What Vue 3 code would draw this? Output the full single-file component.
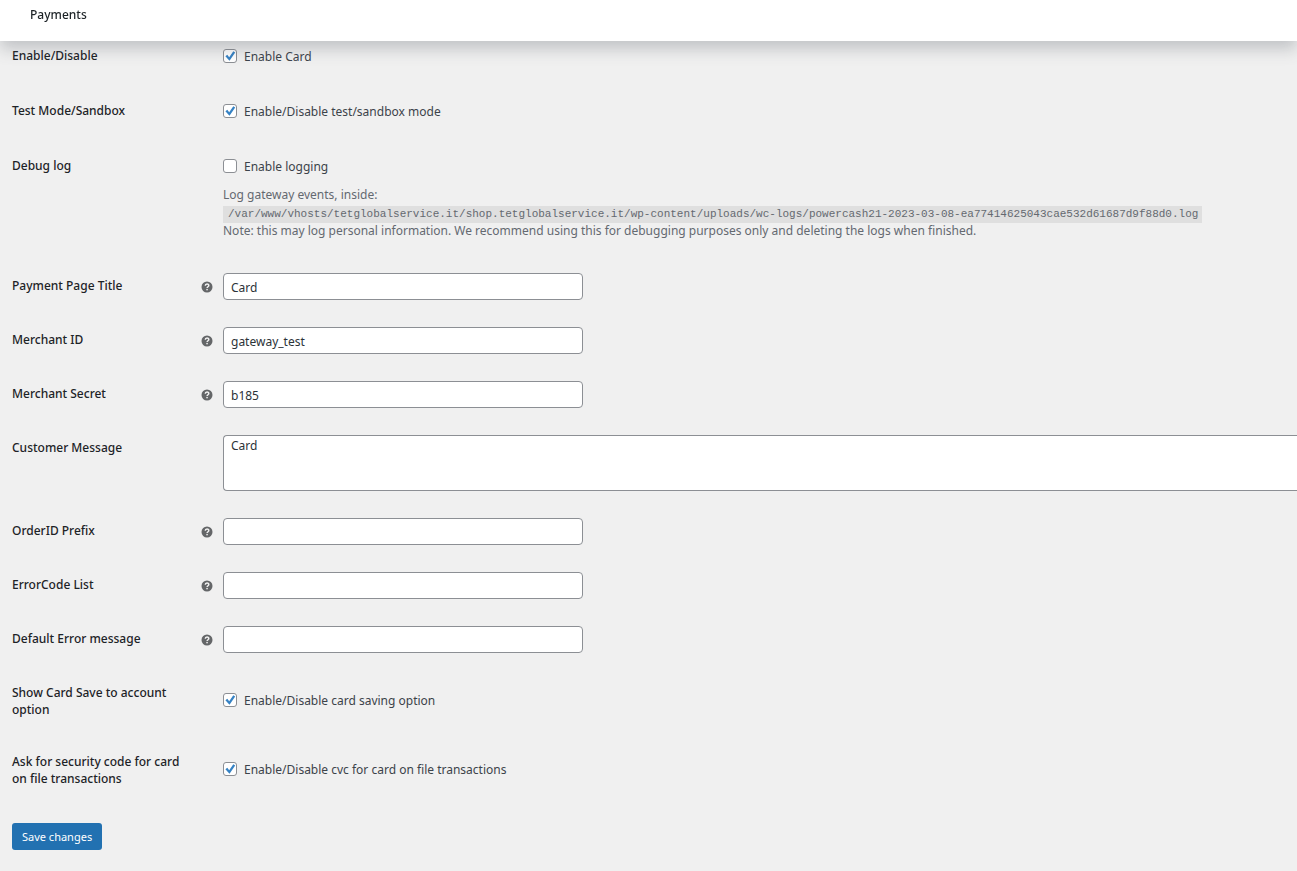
<script setup>
import { reactive } from 'vue'

const logPath =
  '/var/www/vhosts/tetglobalservice.it/shop.tetglobalservice.it/wp-content/uploads/wc-logs/powercash21-2023-03-08-ea77414625043cae532d61687d9f88d0.log'

const fields = reactive([
  { id: 'enabled', type: 'checkbox', label: 'Enable/Disable', text: 'Enable Card', value: true },
  { id: 'sandbox', type: 'checkbox', label: 'Test Mode/Sandbox', text: 'Enable/Disable test/sandbox mode', value: true },
  { id: 'debug', type: 'checkbox', label: 'Debug log', text: 'Enable logging', value: false, log: true },
  { id: 'title', type: 'text', label: 'Payment Page Title', value: 'Card', help: true },
  { id: 'merchant-id', type: 'text', label: 'Merchant ID', value: 'gateway_test', help: true },
  { id: 'merchant-secret', type: 'text', label: 'Merchant Secret', value: 'b185', help: true },
  { id: 'message', type: 'textarea', label: 'Customer Message', value: 'Card' },
  { id: 'prefix', type: 'text', label: 'OrderID Prefix', value: '', help: true },
  { id: 'error-codes', type: 'text', label: 'ErrorCode List', value: '', help: true },
  { id: 'error-message', type: 'text', label: 'Default Error message', value: '', help: true },
  { id: 'save-card', type: 'checkbox', label: 'Show Card Save to account option', text: 'Enable/Disable card saving option', value: true },
  { id: 'ask-cvc', type: 'checkbox', label: 'Ask for security code for card on file transactions', text: 'Enable/Disable cvc for card on file transactions', value: true }
])
</script>

<template>
  <header class="topbar"><h1>Payments</h1></header>
  <form class="settings" @submit.prevent>
    <div v-for="f in fields" :key="f.id" class="row" :class="f.type">
      <div class="head">
        <label :for="f.id">{{ f.label }}</label>
        <svg v-if="f.help" class="help" viewBox="0 0 12 12" aria-hidden="true">
          <circle cx="6" cy="6" r="5.5" fill="#646668" />
          <path d="M4.3 4.7C4.3 2.5 7.8 2.5 7.8 4.5C7.8 5.8 6.1 5.7 6.1 7.1" fill="none" stroke="#f0f0f0" stroke-width="1.5" />
          <rect x="5.3" y="7.9" width="1.5" height="1.4" fill="#f0f0f0" />
        </svg>
      </div>
      <div class="field">
        <template v-if="f.type === 'checkbox'">
          <label class="check">
            <span class="box">
              <input :id="f.id" v-model="f.value" type="checkbox" />
              <svg v-if="f.value" class="tick" viewBox="0 0 14 14" aria-hidden="true">
                <path d="M2.4 7.3L4.3 5.8L6.2 8.2L10.3 2.3L12.2 3.6L6.5 11.8Z" fill="#3582c4" />
              </svg>
            </span>
            <span>{{ f.text }}</span>
          </label>
          <p v-if="f.log" class="description">
            Log gateway events, inside:<br />
            <code>{{ logPath }}</code><br />
            Note: this may log personal information. We recommend using this for debugging purposes only and deleting the logs when finished.
          </p>
        </template>
        <textarea v-else-if="f.type === 'textarea'" :id="f.id" v-model="f.value"></textarea>
        <input v-else :id="f.id" v-model="f.value" type="text" />
      </div>
    </div>
    <button type="submit" class="save">Save changes</button>
  </form>
</template>

<style>
body {
  background: #f0f0f0;
}
</style>

<style scoped>
.topbar {
  position: fixed;
  top: 0;
  left: 0;
  right: 0;
  z-index: 2;
  height: 41px;
  background: #fff;
  box-shadow: 0 8px 16px 0 rgba(85, 93, 102, 0.3);
}
h1 {
  margin: 0;
  padding: 6px 30px;
  font: 500 12px/17px "Noto Sans", "Open Sans", sans-serif;
  color: #1d2327;
}
.settings {
  padding: 30px 0 20px 12px;
  font: 12px/17px "Noto Sans", "Open Sans", sans-serif;
  color: #3c434a;
}
.row {
  display: grid;
  grid-template-columns: 201px minmax(0, 1fr);
  column-gap: 10px;
}
.head {
  display: flex;
  justify-content: space-between;
  padding: 17px 0 18px;
  font-weight: 500;
  color: #1d2327;
}
.head label {
  max-width: 172px;
}
.help {
  flex: none;
  width: 12px;
  height: 12px;
  margin-top: 4px;
}
.field {
  align-self: center;
  padding: 13px 0 14px;
}
.checkbox .field {
  padding: 17px 0 19px;
}
.check {
  display: flex;
  align-items: flex-start;
  gap: 7px;
  line-height: 19px;
}
.box {
  position: relative;
  width: 14px;
  height: 14px;
  margin-top: 2px;
}
.box input {
  appearance: none;
  display: block;
  box-sizing: border-box;
  width: 14px;
  height: 14px;
  margin: 0;
  border: 1px solid #8c8f94;
  border-radius: 3px;
  background: #fff;
}
.tick {
  position: absolute;
  inset: 0;
  pointer-events: none;
}
.description {
  margin: 10px 0 1px;
  line-height: 18px;
  color: #646970;
  white-space: nowrap;
}
code {
  padding: 2px 4px 3px 5px;
  background: #dfdfdf;
  font: 11px/15px "Liberation Mono", monospace;
}
input[type="text"],
textarea {
  display: block;
  box-sizing: border-box;
  border: 1px solid #8c8f94;
  border-radius: 4px;
  background: #fff;
  color: #2c3338;
  font: 12px/17px "Noto Sans", "Open Sans", sans-serif;
}
input[type="text"] {
  width: 360px;
  height: 27px;
  margin: 0;
  padding: 1px 7px 0;
}
textarea {
  width: 100%;
  height: 56px;
  margin: 0;
  padding: 1px 7px;
  border-right: 0;
  border-radius: 4px 0 0 4px;
  resize: none;
}
.save {
  height: 27px;
  margin-top: 18px;
  padding: 0 10px;
  border: 0;
  border-radius: 3px;
  background: #2271b1;
  color: #fff;
  font: 11px/27px "Noto Sans", "Open Sans", sans-serif;
}
</style>
